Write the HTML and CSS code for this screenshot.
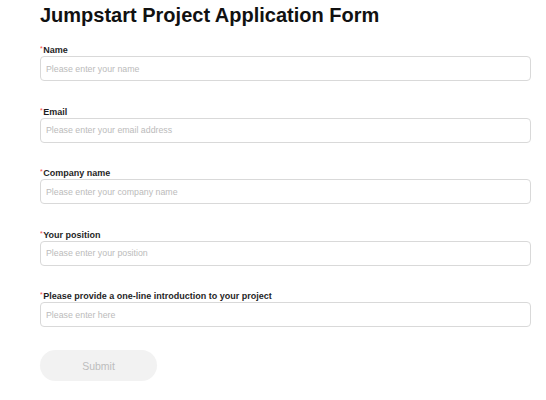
FILE: index.html
```html
<!DOCTYPE html>
<html lang="en">
<head>
<meta charset="utf-8">
<title>Jumpstart Project Application Form</title>
<link rel="stylesheet" href="styles.css">
</head>
<body>
<div class="page">
  <h1 class="title">Jumpstart Project Application Form</h1>
  <form class="form">
    <div class="fields">
      <div class="field">
        <label class="label"><span class="req">*</span>Name</label>
        <input class="input" type="text" placeholder="Please enter your name">
      </div>
      <div class="field">
        <label class="label"><span class="req">*</span>Email</label>
        <input class="input" type="text" placeholder="Please enter your email address">
      </div>
      <div class="field">
        <label class="label"><span class="req">*</span>Company name</label>
        <input class="input" type="text" placeholder="Please enter your company name">
      </div>
      <div class="field">
        <label class="label"><span class="req">*</span>Your position</label>
        <input class="input" type="text" placeholder="Please enter your position">
      </div>
      <div class="field">
        <label class="label"><span class="req">*</span>Please provide a one-line introduction to your project</label>
        <input class="input" type="text" placeholder="Please enter here">
      </div>
    </div>
    <div class="actions">
      <button class="submit" type="button">Submit</button>
    </div>
  </form>
</div>
</body>
</html>
```

FILE: styles.css
```css
html, body {
  margin: 0;
  padding: 0;
  background: #ffffff;
}

body {
  font-family: "Liberation Sans", Arial, sans-serif;
  color: #1f1f1f;
}

.page {
  padding: 3px 15px 0 40px;
}

.title {
  margin: 0 0 17px 0;
  font-size: 20px;
  line-height: 24px;
  font-weight: 700;
  color: #111111;
}

.form {
  margin: 0;
}

.fields {
  display: flex;
  flex-direction: column;
  gap: 24.5px;
}

.field {
  display: flex;
  flex-direction: column;
}

.label {
  display: block;
  height: 12px;
  font-size: 9px;
  line-height: 12px;
  font-weight: 700;
  color: #1f1f1f;
  overflow: hidden;
}

.req {
  color: #f54a45;
  font-size: 7px;
  line-height: 0;
  font-weight: 400;
  vertical-align: 2px;
  margin-right: 0.5px;
}

.input {
  box-sizing: border-box;
  display: block;
  width: 100%;
  height: 25px;
  margin: 0;
  padding: 0 5px;
  border: 1px solid #d9d9d9;
  border-radius: 4px;
  font-family: "Liberation Sans", Arial, sans-serif;
  font-size: 8.8px;
  color: #1f1f1f;
  background: #ffffff;
  outline: none;
}

.input::placeholder {
  color: #bbbbbb;
}

.actions {
  margin-top: 23px;
}

.submit {
  display: block;
  width: 117px;
  height: 31px;
  border: none;
  border-radius: 16px;
  background: #f2f2f2;
  color: #bdbdbd;
  font-family: "Liberation Sans", Arial, sans-serif;
  font-size: 10.5px;
  padding: 0;
}
```
